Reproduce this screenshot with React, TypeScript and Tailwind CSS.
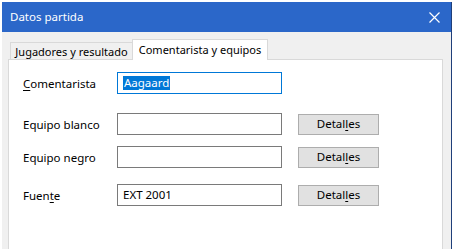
import React from "react";

const font = { fontFamily: '"Noto Sans", "Open Sans", sans-serif' };

function Label({ children }: { children: React.ReactNode }) {
  return <div className="w-[94px] text-[11.5px] text-black leading-none whitespace-nowrap pt-[1px]">{children}</div>;
}

function Button() {
  return (
    <div className="ml-[16px] w-[81px] h-[21px] bg-[#e1e1e1] border border-[#adadad] flex items-center justify-center text-[11.5px] text-black leading-none">
      <span>
        Detal<span className="underline underline-offset-2">l</span>es
      </span>
    </div>
  );
}

function Input({ value }: { value?: string }) {
  return (
    <div className="w-[165px] h-[22px] bg-white border border-[#7a7a7a] flex items-center px-[5px] text-[11.5px] leading-none text-black">
      {value}
    </div>
  );
}

export default function App() {
  return (
    <div className="w-[453px] h-[249px] bg-white overflow-hidden pt-[2px] pl-[2px]" style={font}>
      <div className="w-[450px] h-[247px] flex flex-col border-r border-[#1f3f7a]">
        <div className="h-[30px] bg-[#2b67c9] flex items-center justify-between pl-[8px] pr-[11px]">
          <span className="text-white text-[11.5px] leading-none">Datos partida</span>
          <svg width="11" height="11" viewBox="0 0 11 11">
            <path d="M0.5 0.5 L10.5 10.5 M10.5 0.5 L0.5 10.5" stroke="white" strokeWidth="1.2" />
          </svg>
        </div>
        <div className="flex-1 bg-[#f0f0f0] pl-[6px] pr-[8px] pt-[7px] flex flex-col">
          <div className="flex items-end h-[20px] pl-[2px] relative z-10">
            <div className="h-[17px] w-[123px] border border-b-0 border-[#d9d9d9] bg-[#f0f0f0] flex items-center justify-center text-[11px] leading-none text-black whitespace-nowrap pt-[1px]">
              Jugadores y resultado
            </div>
            <div className="h-[21px] w-[136px] -ml-[1px] border border-b-0 border-[#d9d9d9] bg-white flex items-start pt-[4px] justify-center text-[11px] leading-none text-black -mb-[1px] whitespace-nowrap">
              Comentarista y equipos
            </div>
          </div>
          <div className="flex-1 bg-white border border-[#d9d9d9] border-b-0 pl-[14px] pt-[12px] flex flex-col">
            <div className="flex items-center h-[22px]">
              <Label>
                <span className="underline underline-offset-2">C</span>omentarista
              </Label>
              <div className="w-[165px] h-[22px] bg-white border border-[#0078d7] flex items-center px-[5px] text-[11.5px] leading-none">
                <span className="bg-[#0078d7] text-white px-[1px] py-[1px]">Aagaard</span>
              </div>
            </div>
            <div className="flex items-center h-[22px] mt-[19px]">
              <Label>Equipo blanco</Label>
              <Input />
              <Button />
            </div>
            <div className="flex items-center h-[22px] mt-[11px]">
              <Label>Equipo negro</Label>
              <Input />
              <Button />
            </div>
            <div className="flex items-center h-[22px] mt-[16px]">
              <Label>
                Fuen<span className="underline underline-offset-2">t</span>e
              </Label>
              <Input value="EXT 2001" />
              <Button />
            </div>
          </div>
        </div>
      </div>
    </div>
  );
}
